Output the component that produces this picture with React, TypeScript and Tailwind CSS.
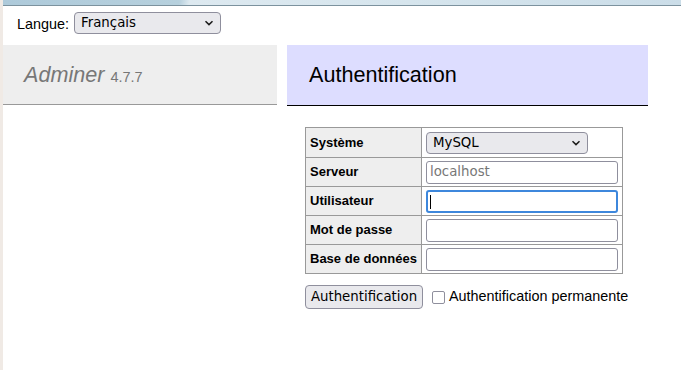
const FIELDS = ['Serveur', 'Utilisateur', 'Mot de passe', 'Base de données']

function Chevron() {
  return (
    <svg width="10" height="6" viewBox="0 0 10 6" className="shrink-0">
      <path d="M1.5 1.2 5 4.6 8.5 1.2" fill="none" stroke="#1b1b1b" strokeWidth="1.5" />
    </svg>
  )
}

export default function App() {
  return (
    <div className="flex h-[370px] w-[681px] overflow-hidden bg-white font-['Liberation_Sans',Arial,sans-serif] text-[14.4px] text-black">
      {/* beige window edge */}
      <div className="w-[3px] shrink-0 bg-[#f0eae5]" />

      <div className="flex min-w-0 flex-1 flex-col">
        {/* toolbar sliver at the top */}
        <div className="h-[5px] shrink-0 bg-[linear-gradient(100deg,#aecada_0%,#b6d0dd_26%,#dde9f0_27.5%,#d6e5ed_60%,#cbdde8_100%)]" />
        <div className="h-px shrink-0 bg-[#7c929e]" />

        {/* language */}
        <div className="flex h-[39px] shrink-0 items-start px-[14px] pt-[6px]">
          <span className="mt-[4px] leading-[17px]">Langue:</span>
          <div className="ml-[5px] flex h-[22px] w-[147px] items-center justify-between rounded-[4px] border border-[#8f8f9d] bg-[#e9e9ed] pl-[6px] pr-[6px] font-['DejaVu_Sans',sans-serif] text-[13.33px]">
            <span>Français</span>
            <Chevron />
          </div>
        </div>

        <div className="flex items-start">
          {/* menu */}
          <div className="w-[274px] shrink-0">
            <h1 className="border-b border-[#999] bg-[#eee] px-[21px] py-[17px] text-[21.6px] leading-[25px] text-[#777]">
              <span className="italic">Adminer</span> <span className="text-[14.5px] leading-none">4.7.7</span>
            </h1>
          </div>

          {/* content */}
          <div className="ml-[10px] w-[361px]">
            <h2 className="border-b border-black bg-[#ddf] px-[22px] py-[17px] text-[21.6px] leading-[26px]">
              Authentification
            </h2>

            <table className="ml-[18px] mt-[21px] border-collapse text-[13px]">
              <tbody>
                <tr>
                  <th className="h-[30px] w-[116px] border border-[#999] bg-[#eee] px-[4px] text-left font-bold">Système</th>
                  <td className="w-[201px] border border-[#999] px-[4px] py-[2px]">
                    <div className="flex h-[22px] w-[162px] items-center justify-between rounded-[4px] border border-[#8f8f9d] bg-[#e9e9ed] pl-[6px] pr-[6px] font-['DejaVu_Sans',sans-serif] text-[13.33px]">
                      <span>MySQL</span>
                      <Chevron />
                    </div>
                  </td>
                </tr>
                {FIELDS.map((f) => (
                  <tr key={f}>
                    <th className="h-[29px] border border-[#999] bg-[#eee] px-[4px] text-left font-bold whitespace-nowrap">{f}</th>
                    <td className="border border-[#999] px-[4px] py-[2px]">
                      {f === 'Utilisateur' ? (
                        <div className="relative h-[23px] w-[192px] rounded-[3px] border-2 border-[#3d87dc] bg-white">
                          <span className="absolute left-[2px] top-[3px] h-[14px] w-px bg-black" />
                        </div>
                      ) : (
                        <div className="flex h-[23px] w-[192px] items-center rounded-[3px] border border-[#8f8f9d] bg-white px-[3px] font-['DejaVu_Sans',sans-serif] text-[13.33px] text-[#777]">
                          {f === 'Serveur' ? 'localhost' : ''}
                        </div>
                      )}
                    </td>
                  </tr>
                ))}
              </tbody>
            </table>

            <div className="ml-[18px] mt-[11px] flex items-center">
              <button className="h-[24px] w-[118px] rounded-[4px] border border-[#8f8f9d] bg-[#e9e9ed] font-['DejaVu_Sans',sans-serif] text-[13.33px] leading-none">
                Authentification
              </button>
              <span className="ml-[9px] h-[13px] w-[13px] rounded-[2px] border border-[#8f8f9d] bg-white" />
              <span className="ml-[4px]">Authentification permanente</span>
            </div>
          </div>
        </div>
      </div>
    </div>
  )
}
